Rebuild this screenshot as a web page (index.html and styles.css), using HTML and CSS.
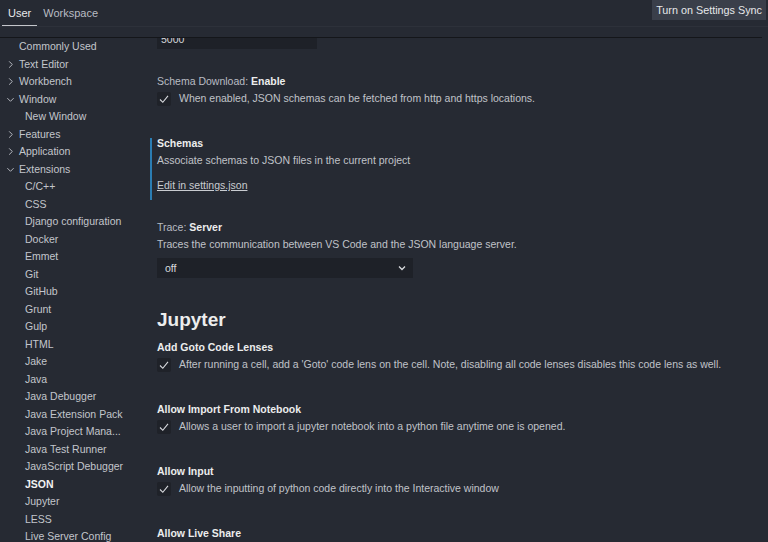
FILE: index.html
```html
<!DOCTYPE html>
<html>
<head>
<meta charset="utf-8">
<link rel="stylesheet" href="styles.css">
</head>
<body>
<div class="page">
  <header class="header">
    <div class="tabbar">
      <div class="tabs">
        <span class="tab active">User</span>
        <span class="tab">Workspace</span>
      </div>
      <button class="sync">Turn on Settings Sync</button>
    </div>
    <div class="header-gap"></div>
  </header>
  <div class="body">
    <nav class="toc">
      <div class="row l0 leaf">Commonly Used</div>
      <div class="row l0"><svg class="chev" viewBox="0 0 10 10"><path d="M3.5 1.5 L7 5 L3.5 8.5"/></svg>Text Editor</div>
      <div class="row l0"><svg class="chev" viewBox="0 0 10 10"><path d="M3.5 1.5 L7 5 L3.5 8.5"/></svg>Workbench</div>
      <div class="row l0"><svg class="chev" viewBox="0 0 10 10"><path d="M1.5 3.5 L5 7 L8.5 3.5"/></svg>Window</div>
      <div class="row l1">New Window</div>
      <div class="row l0"><svg class="chev" viewBox="0 0 10 10"><path d="M3.5 1.5 L7 5 L3.5 8.5"/></svg>Features</div>
      <div class="row l0"><svg class="chev" viewBox="0 0 10 10"><path d="M3.5 1.5 L7 5 L3.5 8.5"/></svg>Application</div>
      <div class="row l0"><svg class="chev" viewBox="0 0 10 10"><path d="M1.5 3.5 L5 7 L8.5 3.5"/></svg>Extensions</div>
      <div class="row l1">C/C++</div>
      <div class="row l1">CSS</div>
      <div class="row l1">Django configuration</div>
      <div class="row l1">Docker</div>
      <div class="row l1">Emmet</div>
      <div class="row l1">Git</div>
      <div class="row l1">GitHub</div>
      <div class="row l1">Grunt</div>
      <div class="row l1">Gulp</div>
      <div class="row l1">HTML</div>
      <div class="row l1">Jake</div>
      <div class="row l1">Java</div>
      <div class="row l1">Java Debugger</div>
      <div class="row l1">Java Extension Pack</div>
      <div class="row l1">Java Project Mana...</div>
      <div class="row l1">Java Test Runner</div>
      <div class="row l1">JavaScript Debugger</div>
      <div class="row l1 selected">JSON</div>
      <div class="row l1">Jupyter</div>
      <div class="row l1">LESS</div>
      <div class="row l1">Live Server Config</div>
    </nav>
    <main class="main">
      <div class="content">
        <div class="setting first">
          <div class="textbox">5000</div>
        </div>
        <div class="setting">
          <div class="title"><span class="cat">Schema Download: </span><b>Enable</b></div>
          <div class="check-row"><span class="checkbox"><svg viewBox="0 0 14 14"><path d="M3 7.5 L5.8 10.3 L11 3.8"/></svg></span><span class="desc">When enabled, JSON schemas can be fetched from http and https locations.</span></div>
        </div>
        <div class="setting focused">
          <div class="title"><b>Schemas</b></div>
          <div class="desc">Associate schemas to JSON files in the current project</div>
          <a class="link">Edit in settings.json</a>
        </div>
        <div class="setting">
          <div class="title"><span class="cat">Trace: </span><b>Server</b></div>
          <div class="desc">Traces the communication between VS Code and the JSON language server.</div>
          <div class="select"><span>off</span><svg viewBox="0 0 10 10"><path d="M2 3.5 L5 6.5 L8 3.5"/></svg></div>
        </div>
        <h2 class="group">Jupyter</h2>
        <div class="setting">
          <div class="title"><b>Add Goto Code Lenses</b></div>
          <div class="check-row"><span class="checkbox"><svg viewBox="0 0 14 14"><path d="M3 7.5 L5.8 10.3 L11 3.8"/></svg></span><span class="desc">After running a cell, add a 'Goto' code lens on the cell. Note, disabling all code lenses disables this code lens as well.</span></div>
        </div>
        <div class="setting">
          <div class="title"><b>Allow Import From Notebook</b></div>
          <div class="check-row"><span class="checkbox"><svg viewBox="0 0 14 14"><path d="M3 7.5 L5.8 10.3 L11 3.8"/></svg></span><span class="desc">Allows a user to import a jupyter notebook into a python file anytime one is opened.</span></div>
        </div>
        <div class="setting">
          <div class="title"><b>Allow Input</b></div>
          <div class="check-row"><span class="checkbox"><svg viewBox="0 0 14 14"><path d="M3 7.5 L5.8 10.3 L11 3.8"/></svg></span><span class="desc">Allow the inputting of python code directly into the Interactive window</span></div>
        </div>
        <div class="setting">
          <div class="title"><b>Allow Live Share</b></div>
        </div>
      </div>
    </main>
  </div>
</div>
</body>
</html>
```
FILE: styles.css
```css
html, body {
  margin: 0;
  padding: 0;
  background: #262a33;
  height: 100%;
  overflow: hidden;
}
body {
  font-family: "Liberation Sans", Arial, sans-serif;
  font-size: 10.5px;
  color: #c5c8ce;
}
.page {
  display: flex;
  flex-direction: column;
  height: 542px;
}
.header {
  flex: none;
  position: relative;
  z-index: 2;
  background: #262a33;
}
.tabbar {
  display: flex;
  justify-content: space-between;
  align-items: flex-start;
  height: 26px;
  border-bottom: 1px solid #2d313a;
}
.tabs {
  display: flex;
  padding-left: 2px;
  height: 26px;
}
.tab {
  padding: 0 6px;
  line-height: 26px;
  color: #b9bcc3;
  font-size: 11px;
  box-sizing: border-box;
  height: 26px;
}
.tab.active {
  color: #e8e9eb;
  border-bottom: 1px solid #c4c6cb;
}
.sync {
  margin: 0 2px 0 0;
  height: 20px;
  padding: 0 4px;
  border: none;
  background: #3a3f4a;
  color: #e6e7e9;
  font-family: "Liberation Sans", Arial, sans-serif;
  font-size: 10.8px;
}
.header-gap {
  height: 10px;
  margin-right: 6px;
  border-bottom: 1px solid #14161a;
}
.body {
  flex: 1;
  display: flex;
  min-height: 0;
}
.toc {
  width: 150px;
  flex: none;
  overflow: hidden;
}
.row {
  height: 17.5px;
  line-height: 17.5px;
  display: flex;
  align-items: center;
  white-space: nowrap;
  color: #c3c6cc;
}
.row.l0 { padding-left: 6px; }
.row.l0.leaf { padding-left: 19px; }
.row.l1 { padding-left: 25px; }
.row.selected { font-weight: bold; color: #f2f2f3; }
.chev {
  width: 9px;
  height: 9px;
  margin-right: 4px;
  fill: none;
  stroke: #b4b7be;
  stroke-width: 1.1;
}
.main {
  flex: 1;
  overflow: hidden;
  padding-right: 12px;
}
.content {
  margin-top: -10px;
}
.setting {
  border-left: 2px solid transparent;
  padding: 0 0 0 5px;
  margin-bottom: 28px;
}
.setting.first {
  margin-bottom: 24px;
  padding-top: 1px;
}
.textbox {
  width: 156px;
  height: 20px;
  line-height: 20px;
  padding-left: 4px;
  background: #1e2128;
  color: #d4d6da;
}
.title {
  line-height: 17px;
  color: #b9bcc3;
}
.title b { color: #eceded; font-weight: bold; }
.desc {
  line-height: 17px;
  color: #c0c3c9;
}
.check-row {
  display: flex;
  align-items: center;
  height: 17px;
}
.checkbox {
  width: 14px;
  height: 14px;
  background: #1f2229;
  border-radius: 2px;
  margin-right: 8px;
  display: flex;
}
.checkbox svg {
  width: 14px;
  height: 14px;
  fill: none;
  stroke: #d8dade;
  stroke-width: 1.1;
}
.setting.focused {
  display: flow-root;
  border-left-color: #2b7db3;
  margin-top: 31px;
  padding-bottom: 6px;
  margin-bottom: 19px;
}
.setting.focused .title {
  margin-top: -3px;
}
.link {
  display: inline-block;
  margin-top: 8px;
  text-decoration: underline;
  color: #c9ccd1;
  line-height: 17px;
}
.select {
  margin-top: 5px;
  width: 256px;
  height: 20px;
  background: #1e2128;
  display: flex;
  align-items: center;
  justify-content: space-between;
  padding: 0 6px 0 8px;
  box-sizing: border-box;
  color: #d8dade;
}
.select svg {
  width: 10px;
  height: 10px;
  fill: none;
  stroke: #d8dade;
  stroke-width: 1.3;
}
.group {
  margin: 29px 0 6px 7px;
  font-size: 19px;
  font-weight: 600;
  line-height: 26px;
  color: #eceded;
}
```
